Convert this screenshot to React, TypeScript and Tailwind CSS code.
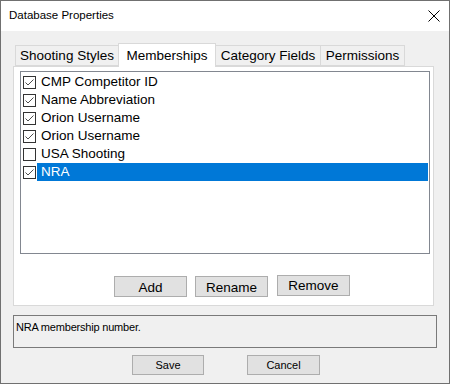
const tabs = [
  { label: "Shooting Styles", width: "w-[104px]" },
  { label: "Memberships", width: "w-[98px]" },
  { label: "Category Fields", width: "w-[106px]" },
  { label: "Permissions", width: "w-[85px]" },
];

const memberships = [
  { name: "CMP Competitor ID", checked: true },
  { name: "Name Abbreviation", checked: true },
  { name: "Orion Username", checked: true },
  { name: "Orion Username", checked: true },
  { name: "USA Shooting", checked: false },
  { name: "NRA", checked: true, selected: true },
];

const CheckBox = ({ checked }: { checked: boolean }) => (
  <div className="w-[13px] h-[13px] border border-[#333333] bg-white flex items-center justify-center shrink-0">
    {checked && (
      <svg width="11" height="11" viewBox="0 0 11 11">
        <path d="M1.5 5.5 L4 8 L9.5 2.5" fill="none" stroke="#4d4d4d" strokeWidth="1" />
      </svg>
    )}
  </div>
);

const App = () => {
  return (
    <div className="w-[450px] h-[384px] border border-[#707070] bg-[#f0f0f0] flex flex-col font-['Liberation_Sans',Arial,sans-serif] text-black overflow-hidden">
      {/* Title bar */}
      <div className="h-[30px] bg-white flex items-center justify-between shrink-0">
        <span className="ml-[8px] text-[11.5px]">Database Properties</span>
        <svg className="mr-[9px]" width="12" height="12" viewBox="0 0 12 12">
          <path d="M0.5 0.5 L11.5 11.5 M11.5 0.5 L0.5 11.5" stroke="#000" strokeWidth="1" />
        </svg>
      </div>

      <div className="flex flex-col pl-[12px]">
        {/* Tab strip */}
        <div className="mt-[12px] h-[23px] flex items-end pl-[2px] relative z-10">
          {tabs.map((tab, i) =>
            tab.label === "Memberships" ? (
              <div
                key={tab.label}
                className={`${tab.width} relative z-10 h-[24px] -mb-px -ml-px bg-white border border-b-0 border-[#d9d9d9] flex justify-center items-start pt-[2px] text-[13.5px]`}
              >
                {tab.label}
              </div>
            ) : (
              <div
                key={tab.label}
                className={`${tab.width} h-[21px] bg-[#f0f0f0] border border-[#d9d9d9] ${
                  i === 0 ? "" : "-ml-px"
                } flex justify-center items-center pt-[2px] text-[13.5px]`}
              >
                {tab.label}
              </div>
            )
          )}
        </div>

        {/* Tab page */}
        <div className="w-[421px] h-[240px] border border-[#d9d9d9] bg-white flex flex-col">
          <div className="ml-[6px] mt-[4px] w-[410px] h-[183px] border border-[#828790] bg-white pt-[1px]">
            {memberships.map((m, i) => (
              <div key={i} className="h-[18px] flex items-center pl-[2px] pr-[1px]">
                <CheckBox checked={m.checked} />
                <div
                  className={`ml-[1px] flex-1 h-[18px] flex items-center pl-[4px] text-[13.5px] ${
                    m.selected ? "bg-[#0078d7] text-white" : ""
                  }`}
                >
                  {m.name}
                </div>
              </div>
            ))}
          </div>

          <div className="flex items-start mt-[21px] ml-[100px]">
            <button className="w-[73px] h-[21px] mt-[1px] bg-[#e1e1e1] border border-[#adadad] text-[13.5px] leading-none pt-[3px]">
              Add
            </button>
            <button className="ml-[8px] w-[73px] h-[21px] mt-[1px] bg-[#e1e1e1] border border-[#adadad] text-[13.5px] leading-none pt-[3px]">
              Rename
            </button>
            <button className="ml-[9px] w-[73px] h-[21px] bg-[#e1e1e1] border border-[#adadad] text-[13.5px] leading-none pt-[1px]">
              Remove
            </button>
          </div>
        </div>

        {/* Description */}
        <div className="mt-[9px] w-[424px] h-[33px] border border-[#7a7a7a] bg-[#f0f0f0] px-[2px] pt-[3px] text-[11px] tracking-[-0.2px]">
          NRA membership number.
        </div>

        {/* Dialog buttons */}
        <div className="flex mt-[7px] ml-[119px]">
          <button className="w-[72px] h-[20px] bg-[#e1e1e1] border border-[#adadad] text-[11px] leading-none">
            Save
          </button>
          <button className="ml-[43px] w-[73px] h-[20px] bg-[#e1e1e1] border border-[#adadad] text-[11px] leading-none">
            Cancel
          </button>
        </div>
      </div>
    </div>
  );
};

export default App;
